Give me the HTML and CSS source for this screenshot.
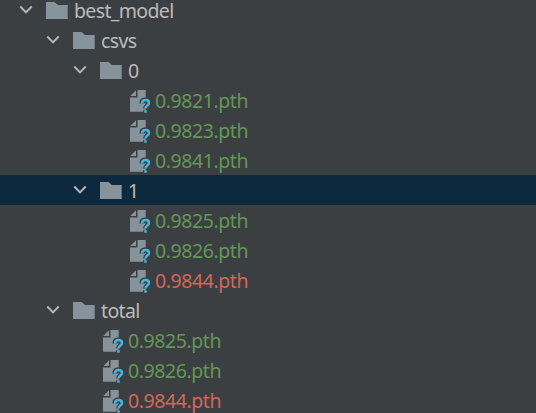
FILE: index.html
```
<!DOCTYPE html>
<html lang="en">
<head>
<meta charset="utf-8">
<title>Project tree</title>
<link rel="stylesheet" href="styles.css">
</head>
<body>
<svg class="defs" aria-hidden="true">
  <symbol id="chevron" viewBox="0 0 14 10"><path d="M1.300 1.500 7 7.400l5.700-5.900" fill="none" stroke="#b4b7b9" stroke-width="2"/></symbol>
  <symbol id="folder" viewBox="0 0 24 24"><path d="M0 4h8.500l3.500 3h9.700v14H0z" fill="#87939a"/></symbol>
  <symbol id="file" viewBox="0 0 24 24">
    <path d="M10.500 0h8.200v21.800H3V7.500h7.500z" fill="#87939a"/>
    <path d="M9 .3v5.700H3.300z" fill="#87939a"/>
    <path d="M15 13.500c0-2.500 1.600-3.600 3.700-3.600s3.500 1.100 3.500 3c0 2.500-3.500 2.600-3.500 5.600M18.700 20.200v3.800" fill="none" stroke="#3c3f41" stroke-width="5.200"/>
    <path d="M15 13.500c0-2.500 1.600-3.500 3.600-3.500s3.400 1.100 3.400 2.900c0 2.500-3.500 2.600-3.500 5.600M18.500 20.200v2.600" fill="none" stroke="#40b6e0" stroke-width="2.500"/>
  </symbol>
</svg>
<main class="tree">
  <div class="row d0"><svg class="chevron"><use href="#chevron"/></svg><svg class="icon"><use href="#folder"/></svg><span class="name">best_model</span></div>
  <div class="row d1"><svg class="chevron"><use href="#chevron"/></svg><svg class="icon"><use href="#folder"/></svg><span class="name">csvs</span></div>
  <div class="row d2"><svg class="chevron"><use href="#chevron"/></svg><svg class="icon"><use href="#folder"/></svg><span class="name">0</span></div>
  <div class="row file d3"><svg class="icon"><use href="#file"/></svg><span class="name">0.9821.pth</span></div>
  <div class="row file d3"><svg class="icon"><use href="#file"/></svg><span class="name">0.9823.pth</span></div>
  <div class="row file d3"><svg class="icon"><use href="#file"/></svg><span class="name">0.9841.pth</span></div>
  <div class="row d2 selected"><svg class="chevron"><use href="#chevron"/></svg><svg class="icon"><use href="#folder"/></svg><span class="name">1</span></div>
  <div class="row file d3"><svg class="icon"><use href="#file"/></svg><span class="name">0.9825.pth</span></div>
  <div class="row file d3"><svg class="icon"><use href="#file"/></svg><span class="name">0.9826.pth</span></div>
  <div class="row file d3 unversioned"><svg class="icon"><use href="#file"/></svg><span class="name">0.9844.pth</span></div>
  <div class="row d1"><svg class="chevron"><use href="#chevron"/></svg><svg class="icon"><use href="#folder"/></svg><span class="name">total</span></div>
  <div class="row file d2"><svg class="icon"><use href="#file"/></svg><span class="name">0.9825.pth</span></div>
  <div class="row file d2"><svg class="icon"><use href="#file"/></svg><span class="name">0.9826.pth</span></div>
  <div class="row file d2 unversioned"><svg class="icon"><use href="#file"/></svg><span class="name">0.9844.pth</span></div>
</main>
</body>
</html>
```
FILE: styles.css
```
body {
  margin: 0;
  height: 413px;
  overflow: hidden;
  background: #3c3f41;
}
.defs { display: none; }
.tree {
  margin-top: -5px;
  font: 400 19.5px/20px "Noto Sans", "Open Sans", sans-serif;
  color: #bbbbbb;
}
.row {
  display: flex;
  align-items: center;
  height: 30px;
  white-space: nowrap;
}
.d0 { padding-left: 19px; }
.d1 { padding-left: 46px; }
.d2 { padding-left: 73px; }
.d3 { padding-left: 100px; }
.selected { background: #0d293e; }
.chevron {
  flex: none;
  width: 14px;
  height: 10px;
  margin-right: 13px;
}
.icon {
  flex: none;
  width: 24px;
  height: 24px;
  margin-right: 4px;
}
.name {
  margin-top: 2px;
  letter-spacing: -0.65px;
}
.file { color: #629755; }
.file .icon {
  margin-top: 4px;
  margin-left: 27px;
}
.file .name { letter-spacing: -0.42px; }
.unversioned { color: #d1675a; }
```
